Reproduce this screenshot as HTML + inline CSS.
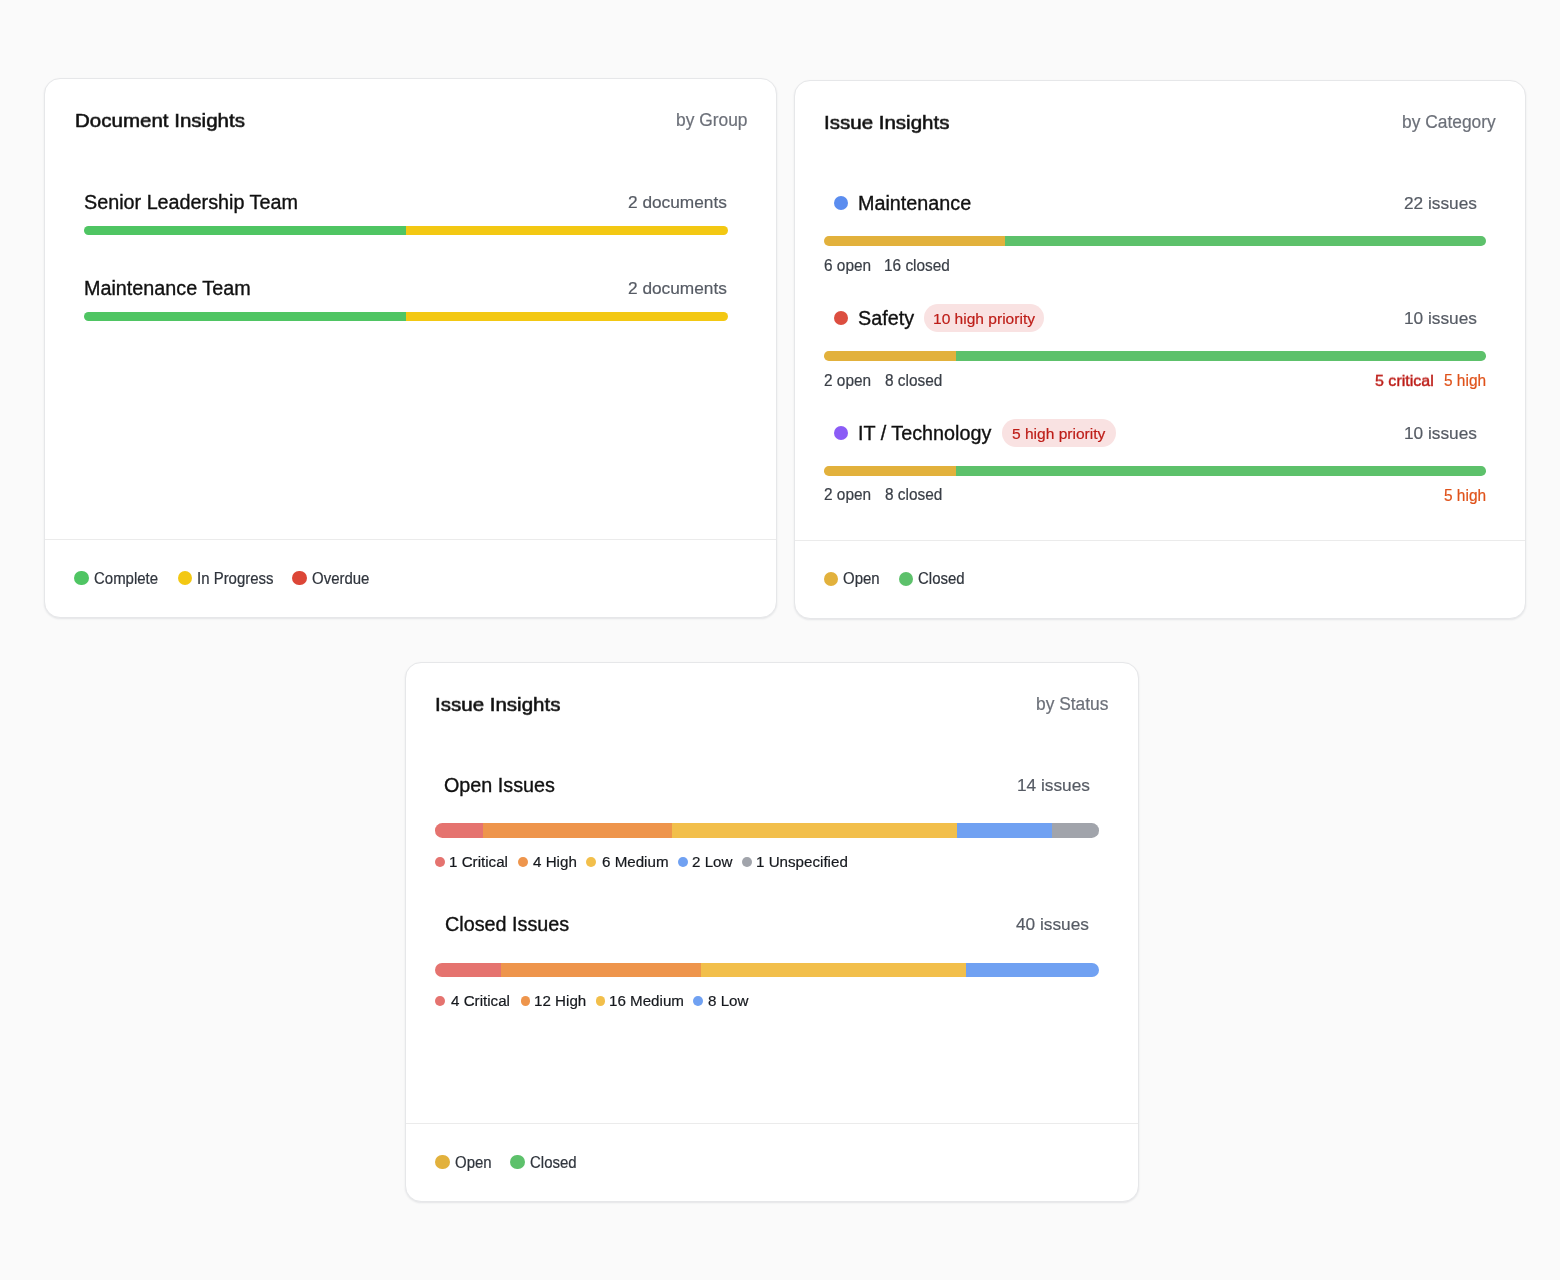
<!DOCTYPE html>
<html><head><meta charset="utf-8"><style>
html,body{margin:0;padding:0}
body{width:1560px;height:1280px;background:#fafafa;position:relative;overflow:hidden;font-family:"Liberation Sans",sans-serif}
body>div,body>span{position:absolute}
span{line-height:1;white-space:nowrap;will-change:transform}
.card{background:#ffffff;border:1px solid #e6e7e9;border-radius:16px;box-sizing:border-box;box-shadow:0 1px 2px rgba(30,40,60,0.10)}
</style></head><body>
<div class="card" style="left:44px;top:78px;width:733px;height:540px"></div>
<div style="left:45px;top:539px;width:731px;height:1px;background:#ebebeb"></div>
<div class="card" style="left:794px;top:80px;width:732px;height:539px"></div>
<div style="left:795px;top:540px;width:730px;height:1px;background:#ebebeb"></div>
<div class="card" style="left:405px;top:662px;width:734px;height:540px"></div>
<div style="left:406px;top:1123px;width:732px;height:1px;background:#ebebeb"></div>
<div style="left:84.00px;top:225.70px;width:644.00px;height:9.60px;border-radius:4.80px;overflow:hidden"><div style="position:absolute;left:0.00px;top:0;width:322.00px;height:100%;background:#4fc563"></div><div style="position:absolute;left:322.00px;top:0;width:322.00px;height:100%;background:#f3c813"></div></div>
<div style="left:84.00px;top:311.90px;width:644.00px;height:9.60px;border-radius:4.80px;overflow:hidden"><div style="position:absolute;left:0.00px;top:0;width:322.00px;height:100%;background:#4fc563"></div><div style="position:absolute;left:322.00px;top:0;width:322.00px;height:100%;background:#f3c813"></div></div>
<div style="left:74.20px;top:570.80px;width:14.50px;height:14.50px;border-radius:50%;background:#4fc563"></div>
<div style="left:177.90px;top:570.80px;width:14.50px;height:14.50px;border-radius:50%;background:#f3c813"></div>
<div style="left:292.40px;top:570.80px;width:14.50px;height:14.50px;border-radius:50%;background:#dc4637"></div>
<div style="left:833.80px;top:195.80px;width:14.30px;height:14.30px;border-radius:50%;background:#5b8def"></div>
<div style="left:824.00px;top:236.30px;width:662.00px;height:9.90px;border-radius:4.95px;overflow:hidden"><div style="position:absolute;left:0.00px;top:0;width:180.50px;height:100%;background:#e2b13c"></div><div style="position:absolute;left:180.50px;top:0;width:481.50px;height:100%;background:#5dc16b"></div></div>
<div style="left:833.80px;top:310.80px;width:14.30px;height:14.30px;border-radius:50%;background:#dc4e40"></div>
<div style="left:924.20px;top:303.80px;width:120.00px;height:28.10px;background:#f9e2e2;border-radius:14px"></div>
<div style="left:824.00px;top:351.30px;width:662.00px;height:9.60px;border-radius:4.80px;overflow:hidden"><div style="position:absolute;left:0.00px;top:0;width:132.40px;height:100%;background:#e2b13c"></div><div style="position:absolute;left:132.40px;top:0;width:529.60px;height:100%;background:#5dc16b"></div></div>
<div style="left:833.80px;top:425.80px;width:14.30px;height:14.30px;border-radius:50%;background:#8b5cf6"></div>
<div style="left:1001.70px;top:418.70px;width:113.90px;height:28.20px;background:#f9e2e2;border-radius:14px"></div>
<div style="left:824.00px;top:466.30px;width:662.00px;height:9.70px;border-radius:4.85px;overflow:hidden"><div style="position:absolute;left:0.00px;top:0;width:132.40px;height:100%;background:#e2b13c"></div><div style="position:absolute;left:132.40px;top:0;width:529.60px;height:100%;background:#5dc16b"></div></div>
<div style="left:824.10px;top:571.80px;width:14.30px;height:14.30px;border-radius:50%;background:#e2b13c"></div>
<div style="left:898.80px;top:571.80px;width:14.30px;height:14.30px;border-radius:50%;background:#5dc16b"></div>
<div style="left:435.00px;top:823.30px;width:664.00px;height:14.60px;border-radius:7.30px;overflow:hidden"><div style="position:absolute;left:0.00px;top:0;width:47.80px;height:100%;background:#e5736f"></div><div style="position:absolute;left:47.80px;top:0;width:189.30px;height:100%;background:#ee954c"></div><div style="position:absolute;left:237.10px;top:0;width:284.60px;height:100%;background:#f2bf4b"></div><div style="position:absolute;left:521.70px;top:0;width:94.90px;height:100%;background:#70a1f2"></div><div style="position:absolute;left:616.60px;top:0;width:47.40px;height:100%;background:#a1a4ab"></div></div>
<div style="left:435.00px;top:857.10px;width:9.80px;height:9.80px;border-radius:50%;background:#e5736f"></div>
<div style="left:518.00px;top:857.10px;width:9.80px;height:9.80px;border-radius:50%;background:#ee954c"></div>
<div style="left:586.30px;top:857.10px;width:9.80px;height:9.80px;border-radius:50%;background:#f2bf4b"></div>
<div style="left:678.30px;top:857.10px;width:9.80px;height:9.80px;border-radius:50%;background:#70a1f2"></div>
<div style="left:742.00px;top:857.10px;width:9.80px;height:9.80px;border-radius:50%;background:#a1a4ab"></div>
<div style="left:435.00px;top:963.10px;width:664.00px;height:14.00px;border-radius:7.00px;overflow:hidden"><div style="position:absolute;left:0.00px;top:0;width:66.40px;height:100%;background:#e5736f"></div><div style="position:absolute;left:66.40px;top:0;width:199.20px;height:100%;background:#ee954c"></div><div style="position:absolute;left:265.60px;top:0;width:265.60px;height:100%;background:#f2bf4b"></div><div style="position:absolute;left:531.20px;top:0;width:132.80px;height:100%;background:#70a1f2"></div></div>
<div style="left:435.00px;top:996.40px;width:9.80px;height:9.80px;border-radius:50%;background:#e5736f"></div>
<div style="left:520.50px;top:996.40px;width:9.80px;height:9.80px;border-radius:50%;background:#ee954c"></div>
<div style="left:595.50px;top:996.40px;width:9.80px;height:9.80px;border-radius:50%;background:#f2bf4b"></div>
<div style="left:693.30px;top:996.40px;width:9.80px;height:9.80px;border-radius:50%;background:#70a1f2"></div>
<div style="left:435.20px;top:1155.00px;width:14.40px;height:14.40px;border-radius:50%;background:#e2b13c"></div>
<div style="left:510.20px;top:1155.00px;width:14.40px;height:14.40px;border-radius:50%;background:#5dc16b"></div>
<span id="c1t" style="left:75.42px;top:110.18px;font-size:20.53px;font-weight:400;color:#111111;-webkit-text-stroke:0.6px #111111;transform:scaleY(0.93);transform-origin:0 84.65%">Document Insights</span>
<span id="c1b" style="right:812.92px;top:112.36px;font-size:17.39px;font-weight:400;color:#6c7079;-webkit-text-stroke:0.2px #6c7079;transform:scaleY(1.07);transform-origin:0 84.65%">by Group</span>
<span id="c1n1" style="left:83.67px;top:192.82px;font-size:19.77px;font-weight:400;color:#111111;-webkit-text-stroke:0.35px #111111;transform:scaleY(1.02);transform-origin:0 84.65%">Senior Leadership Team</span>
<span id="c1c1" style="right:833.56px;top:193.80px;font-size:17.28px;font-weight:400;color:#565b64;-webkit-text-stroke:0.2px #565b64">2 documents</span>
<span id="c1n2" style="left:84.24px;top:278.82px;font-size:19.77px;font-weight:400;color:#111111;-webkit-text-stroke:0.35px #111111;transform:scaleY(1.02);transform-origin:0 84.65%">Maintenance Team</span>
<span id="c1c2" style="right:833.56px;top:279.80px;font-size:17.28px;font-weight:400;color:#565b64;-webkit-text-stroke:0.2px #565b64">2 documents</span>
<span id="c1l1" style="left:94.00px;top:571.84px;font-size:14.97px;font-weight:400;color:#30353d;-webkit-text-stroke:0.2px #30353d;transform:scaleY(1.04);transform-origin:0 84.65%">Complete</span>
<span id="c1l2" style="left:197.06px;top:571.83px;font-size:14.97px;font-weight:400;color:#30353d;-webkit-text-stroke:0.2px #30353d;transform:scaleY(1.04);transform-origin:0 84.65%">In Progress</span>
<span id="c1l3" style="left:312.00px;top:571.84px;font-size:14.97px;font-weight:400;color:#30353d;-webkit-text-stroke:0.2px #30353d;transform:scaleY(1.04);transform-origin:0 84.65%">Overdue</span>
<span id="c2t" style="left:824.10px;top:111.68px;font-size:20.53px;font-weight:400;color:#111111;-webkit-text-stroke:0.6px #111111;transform:scaleY(0.93);transform-origin:0 84.65%">Issue Insights</span>
<span id="c2b" style="right:64.48px;top:113.76px;font-size:17.39px;font-weight:400;color:#6c7079;-webkit-text-stroke:0.2px #6c7079;transform:scaleY(1.07);transform-origin:0 84.65%">by Category</span>
<span id="c2n1" style="left:858.36px;top:194.13px;font-size:19.77px;font-weight:400;color:#111111;-webkit-text-stroke:0.35px #111111;transform:scaleY(1.02);transform-origin:0 84.65%">Maintenance</span>
<span id="c2c1" style="right:82.92px;top:195.01px;font-size:17.28px;font-weight:400;color:#565b64;-webkit-text-stroke:0.2px #565b64">22 issues</span>
<span id="c2o1" style="left:823.84px;top:257.61px;font-size:15.40px;font-weight:400;color:#3a3f47;-webkit-text-stroke:0.2px #3a3f47;transform:scaleY(1.04);transform-origin:0 84.65%">6 open</span>
<span id="c2x1" style="left:884.44px;top:257.61px;font-size:15.40px;font-weight:400;color:#3a3f47;-webkit-text-stroke:0.2px #3a3f47;transform:scaleY(1.04);transform-origin:0 84.65%">16 closed</span>
<span id="c2n2" style="left:857.82px;top:309.02px;font-size:19.77px;font-weight:400;color:#111111;-webkit-text-stroke:0.35px #111111;transform:scaleY(1.02);transform-origin:0 84.65%">Safety</span>
<span id="c2p2" style="left:933.32px;top:310.50px;font-size:15.56px;font-weight:400;color:#bd1d18;-webkit-text-stroke:0.2px #bd1d18">10 high priority</span>
<span id="c2c2" style="right:82.76px;top:310.11px;font-size:17.28px;font-weight:400;color:#565b64;-webkit-text-stroke:0.2px #565b64">10 issues</span>
<span id="c2o2" style="left:824.14px;top:372.50px;font-size:15.40px;font-weight:400;color:#3a3f47;-webkit-text-stroke:0.2px #3a3f47;transform:scaleY(1.04);transform-origin:0 84.65%">2 open</span>
<span id="c2x2" style="left:885.36px;top:372.51px;font-size:15.40px;font-weight:400;color:#3a3f47;-webkit-text-stroke:0.2px #3a3f47;transform:scaleY(1.04);transform-origin:0 84.65%">8 closed</span>
<span id="c2k2" style="left:1375.30px;top:371.74px;font-size:16.04px;font-weight:400;color:#bd1d18;-webkit-text-stroke:0.45px #bd1d18;transform:scaleY(0.93);transform-origin:0 84.65%">5 critical</span>
<span id="c2h2" style="right:73.70px;top:372.71px;font-size:15.45px;font-weight:400;color:#df521a;-webkit-text-stroke:0.2px #df521a;transform:scaleY(1.03);transform-origin:0 84.65%">5 high</span>
<span id="c2n3" style="left:857.62px;top:424.22px;font-size:19.77px;font-weight:400;color:#111111;-webkit-text-stroke:0.35px #111111;transform:scaleY(1.02);transform-origin:0 84.65%">IT / Technology</span>
<span id="c2p3" style="left:1011.94px;top:425.51px;font-size:15.56px;font-weight:400;color:#bd1d18;-webkit-text-stroke:0.2px #bd1d18">5 high priority</span>
<span id="c2c3" style="right:82.76px;top:425.11px;font-size:17.28px;font-weight:400;color:#565b64;-webkit-text-stroke:0.2px #565b64">10 issues</span>
<span id="c2o3" style="left:824.14px;top:487.41px;font-size:15.40px;font-weight:400;color:#3a3f47;-webkit-text-stroke:0.2px #3a3f47;transform:scaleY(1.04);transform-origin:0 84.65%">2 open</span>
<span id="c2x3" style="left:885.36px;top:487.41px;font-size:15.40px;font-weight:400;color:#3a3f47;-webkit-text-stroke:0.2px #3a3f47;transform:scaleY(1.04);transform-origin:0 84.65%">8 closed</span>
<span id="c2h3" style="right:73.70px;top:487.71px;font-size:15.45px;font-weight:400;color:#df521a;-webkit-text-stroke:0.2px #df521a;transform:scaleY(1.03);transform-origin:0 84.65%">5 high</span>
<span id="c2l1" style="left:843.40px;top:572.24px;font-size:14.97px;font-weight:400;color:#30353d;-webkit-text-stroke:0.2px #30353d;transform:scaleY(1.04);transform-origin:0 84.65%">Open</span>
<span id="c2l2" style="left:918.02px;top:572.24px;font-size:14.97px;font-weight:400;color:#30353d;-webkit-text-stroke:0.2px #30353d;transform:scaleY(1.04);transform-origin:0 84.65%">Closed</span>
<span id="c3t" style="left:435.40px;top:693.79px;font-size:20.53px;font-weight:400;color:#111111;-webkit-text-stroke:0.6px #111111;transform:scaleY(0.93);transform-origin:0 84.65%">Issue Insights</span>
<span id="c3b" style="right:451.98px;top:695.56px;font-size:17.39px;font-weight:400;color:#6c7079;-webkit-text-stroke:0.2px #6c7079;transform:scaleY(1.07);transform-origin:0 84.65%">by Status</span>
<span id="c3n1" style="left:444.14px;top:776.32px;font-size:19.77px;font-weight:400;color:#111111;-webkit-text-stroke:0.35px #111111;transform:scaleY(1.02);transform-origin:0 84.65%">Open Issues</span>
<span id="c3c1" style="right:469.96px;top:777.01px;font-size:17.28px;font-weight:400;color:#565b64;-webkit-text-stroke:0.2px #565b64">14 issues</span>
<span id="c3a1" style="left:449.10px;top:854.41px;font-size:15.17px;font-weight:400;color:#16191e;-webkit-text-stroke:0.2px #16191e">1 Critical</span>
<span id="c3a2" style="left:533.28px;top:854.41px;font-size:15.17px;font-weight:400;color:#16191e;-webkit-text-stroke:0.2px #16191e">4 High</span>
<span id="c3a3" style="left:601.64px;top:854.41px;font-size:15.17px;font-weight:400;color:#16191e;-webkit-text-stroke:0.2px #16191e">6 Medium</span>
<span id="c3a4" style="left:692.20px;top:854.41px;font-size:15.17px;font-weight:400;color:#16191e;-webkit-text-stroke:0.2px #16191e">2 Low</span>
<span id="c3a5" style="left:756.22px;top:854.41px;font-size:15.17px;font-weight:400;color:#16191e;-webkit-text-stroke:0.2px #16191e">1 Unspecified</span>
<span id="c3n2" style="left:444.86px;top:915.43px;font-size:19.77px;font-weight:400;color:#111111;-webkit-text-stroke:0.35px #111111;transform:scaleY(1.02);transform-origin:0 84.65%">Closed Issues</span>
<span id="c3c2" style="right:470.78px;top:915.90px;font-size:17.28px;font-weight:400;color:#565b64;-webkit-text-stroke:0.2px #565b64">40 issues</span>
<span id="c3b1" style="left:450.86px;top:993.41px;font-size:15.17px;font-weight:400;color:#16191e;-webkit-text-stroke:0.2px #16191e">4 Critical</span>
<span id="c3b2" style="left:533.80px;top:993.41px;font-size:15.17px;font-weight:400;color:#16191e;-webkit-text-stroke:0.2px #16191e">12 High</span>
<span id="c3b3" style="left:609.26px;top:993.41px;font-size:15.17px;font-weight:400;color:#16191e;-webkit-text-stroke:0.2px #16191e">16 Medium</span>
<span id="c3b4" style="left:707.62px;top:993.41px;font-size:15.17px;font-weight:400;color:#16191e;-webkit-text-stroke:0.2px #16191e">8 Low</span>
<span id="c3l1" style="left:454.56px;top:1155.74px;font-size:14.97px;font-weight:400;color:#30353d;-webkit-text-stroke:0.2px #30353d;transform:scaleY(1.04);transform-origin:0 84.65%">Open</span>
<span id="c3l2" style="left:529.78px;top:1155.74px;font-size:14.97px;font-weight:400;color:#30353d;-webkit-text-stroke:0.2px #30353d;transform:scaleY(1.04);transform-origin:0 84.65%">Closed</span>
</body></html>
